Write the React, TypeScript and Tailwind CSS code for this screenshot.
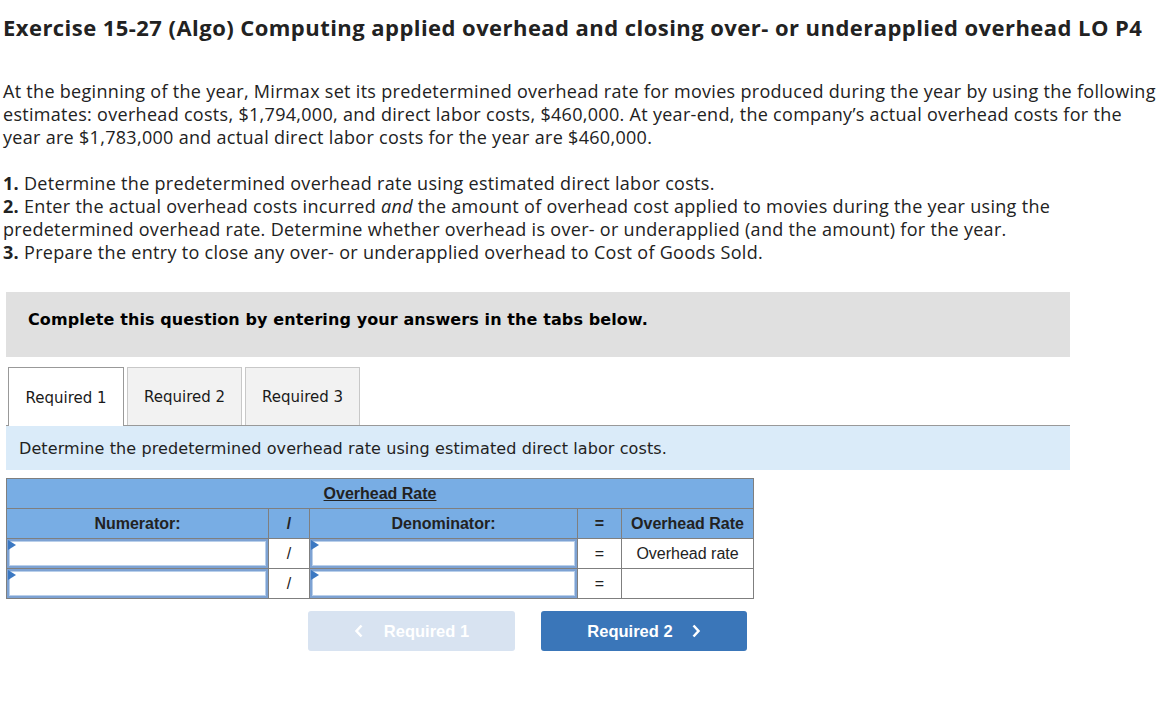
import React from "react";

const proxima = { fontFamily: "'Open Sans', Lato, sans-serif" };
const verdana = { fontFamily: "'DejaVu Sans', Verdana, sans-serif" };
const arial = { fontFamily: "'Liberation Sans', Arial, sans-serif" };

function InputCell() {
  return (
    <td className="border border-[#7f7f7f] p-0 h-[30px]">
      <div className="relative h-[29px] w-full bg-white border-2 border-[#7da2d3] shadow-[inset_0_0_0_1px_#b9cfea]">
        <div className="absolute left-[-1px] top-[-1px] w-0 h-0 border-t-[5px] border-b-[5px] border-l-[8px] border-t-transparent border-b-transparent border-l-[#3b78c2]" />
      </div>
    </td>
  );
}

export default function App() {
  return (
    <div className="bg-white w-[1174px] h-[701px] text-[#1a1a1a] overflow-hidden">
      <h1
        className="text-[22px] font-bold leading-[26px] pl-[3px] pt-[14px] text-[#222] whitespace-nowrap tracking-[0.45px]"
        style={proxima}
      >
        Exercise 15-27 (Algo) Computing applied overhead and closing over- or underapplied overhead LO P4
      </h1>
      <div
        className="pl-[3px] text-[18px] leading-[23px] text-[#222] mt-[40px] whitespace-nowrap tracking-[0.3px]"
        style={proxima}
      >
        <p>
          At the beginning of the year, Mirmax set its predetermined overhead rate for movies produced during the year by using the following
          <br />
          estimates: overhead costs, $1,794,000, and direct labor costs, $460,000. At year-end, the company’s actual overhead costs for the
          <br />
          year are $1,783,000 and actual direct labor costs for the year are $460,000.
        </p>
        <p className="mt-[23px]">
          <b>1.</b> Determine the predetermined overhead rate using estimated direct labor costs.
          <br />
          <b>2.</b> Enter the actual overhead costs incurred <i>and</i> the amount of overhead cost applied to movies during the year using the
          <br />
          predetermined overhead rate. Determine whether overhead is over- or underapplied (and the amount) for the year.
          <br />
          <b>3.</b> Prepare the entry to close any over- or underapplied overhead to Cost of Goods Sold.
        </p>
      </div>

      <div className="ml-[6px] w-[1064px]">
        <div
          className="mt-[28px] h-[65px] bg-[#e0e0e0] flex items-center pl-[22px] pb-[10px] text-[16px] font-bold text-black tracking-[0.1px]"
          style={verdana}
        >
          <span>Complete this question by entering your answers in the tabs below.</span>
        </div>

        <div className="mt-[10px] flex items-end border-b border-[#999] h-[59px] text-[15px]" style={verdana}>
          <div className="ml-[2px] w-[116px] h-[59px] bg-white border border-b-0 border-[#999] flex items-center justify-center pt-[2px] relative top-[1px]">
            Required 1
          </div>
          <div className="ml-[3px] w-[115px] h-[58px] bg-[#f2f2f2] border border-b-0 border-[#c8c8c8] flex items-center justify-center pt-[2px]">
            Required 2
          </div>
          <div className="ml-[3px] w-[115px] h-[58px] bg-[#f2f2f2] border border-b-0 border-[#c8c8c8] flex items-center justify-center pt-[2px]">
            Required 3
          </div>
        </div>

        <div
          className="h-[44px] bg-[#daebf9] flex items-center pl-[13px] pt-[2px] text-[16px] text-[#222] tracking-[0.1px]"
          style={verdana}
        >
          Determine the predetermined overhead rate using estimated direct labor costs.
        </div>

        <table className="mt-[8px] border-collapse text-[16px] text-[#222] w-[747px] table-fixed" style={arial}>
          <colgroup>
            <col className="w-[262px]" />
            <col className="w-[41px]" />
            <col className="w-[268px]" />
            <col className="w-[44px]" />
            <col className="w-[132px]" />
          </colgroup>
          <tbody>
            <tr className="h-[30px] bg-[#78ade4]">
              <td colSpan={5} className="border border-[#7f7f7f] text-center font-bold underline">
                Overhead Rate
              </td>
            </tr>
            <tr className="h-[30px] bg-[#78ade4] font-bold">
              <td className="border border-[#7f7f7f] text-center">Numerator:</td>
              <td className="border border-[#7f7f7f] text-center">/</td>
              <td className="border border-[#7f7f7f] text-center">Denominator:</td>
              <td className="border border-[#7f7f7f] text-center">=</td>
              <td className="border border-[#7f7f7f] text-center">Overhead Rate</td>
            </tr>
            <tr className="h-[30px]">
              <InputCell />
              <td className="border border-[#7f7f7f] text-center">/</td>
              <InputCell />
              <td className="border border-[#7f7f7f] text-center">=</td>
              <td className="border border-[#7f7f7f] text-center">Overhead rate</td>
            </tr>
            <tr className="h-[30px]">
              <InputCell />
              <td className="border border-[#7f7f7f] text-center">/</td>
              <InputCell />
              <td className="border border-[#7f7f7f] text-center">=</td>
              <td className="border border-[#7f7f7f] text-center"></td>
            </tr>
          </tbody>
        </table>

        <div className="mt-[12px] ml-[302px] flex gap-[26px] text-[16.5px] font-bold text-white" style={arial}>
          <div className="w-[207px] h-[40px] rounded-[3px] bg-[#d8e3f1] flex items-center justify-center gap-[20px]">
            <svg width="10" height="14" viewBox="0 0 10 14" fill="none" stroke="white" strokeWidth="2.5">
              <path d="M7.5 1.5 L2.5 7 L7.5 12.5" />
            </svg>
            <span>Required 1</span>
          </div>
          <div className="w-[206px] h-[40px] rounded-[3px] bg-[#3a76b9] flex items-center justify-center gap-[18px]">
            <span>Required 2</span>
            <svg width="10" height="14" viewBox="0 0 10 14" fill="none" stroke="white" strokeWidth="2.5">
              <path d="M2.5 1.5 L7.5 7 L2.5 12.5" />
            </svg>
          </div>
        </div>
      </div>
    </div>
  );
}
